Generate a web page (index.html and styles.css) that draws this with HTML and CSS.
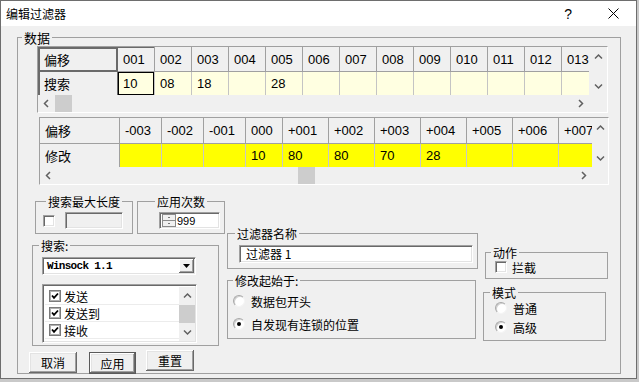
FILE: index.html
```html
<!DOCTYPE html>
<html lang="zh">
<head>
    <meta charset="UTF-8">
    <title>编辑过滤器</title>
    <link rel="stylesheet" href="styles.css">
</head>
<body>
<div class="window">
    <div class="titlebar">
        <span class="title">编辑过滤器</span>
        <span class="help">?</span>
        <span class="close">
            <svg width="11" height="11" viewBox="0 0 11 11"><path d="M0.5 0.5 L10.5 10.5 M10.5 0.5 L0.5 10.5" stroke="#000" stroke-width="1"/></svg>
        </span>
    </div>

    <div class="client">
        <fieldset class="box data-box">
            <legend>数据</legend>

            <!-- search bytes -->
            <div class="grid grid-search">
                <div class="grid-main">
                    <div class="cells">
                        <div class="cell head corner">偏移</div>
                        <div class="cell head sel-col">001</div>
                        <div class="cell head">002</div>
                        <div class="cell head">003</div>
                        <div class="cell head">004</div>
                        <div class="cell head">005</div>
                        <div class="cell head">006</div>
                        <div class="cell head">007</div>
                        <div class="cell head">008</div>
                        <div class="cell head">009</div>
                        <div class="cell head">010</div>
                        <div class="cell head">011</div>
                        <div class="cell head">012</div>
                        <div class="cell head">013</div>
                        <div class="cell rowhead sel-row">搜索</div>
                        <div class="cell val current">10</div>
                        <div class="cell val">08</div>
                        <div class="cell val">18</div>
                        <div class="cell val"></div>
                        <div class="cell val">28</div>
                        <div class="cell val"></div>
                        <div class="cell val"></div>
                        <div class="cell val"></div>
                        <div class="cell val"></div>
                        <div class="cell val"></div>
                        <div class="cell val"></div>
                        <div class="cell val"></div>
                        <div class="cell val"></div>
                    </div>
                    <div class="vscroll">
                        <span class="arrow"><svg width="9" height="7" viewBox="0 0 9 7"><path d="M1 5.5 L4.5 2 L8 5.5" fill="none" stroke="#606060" stroke-width="1.5"/></svg></span>
                        <span class="arrow"><svg width="9" height="7" viewBox="0 0 9 7"><path d="M1 1.5 L4.5 5 L8 1.5" fill="none" stroke="#606060" stroke-width="1.5"/></svg></span>
                    </div>
                </div>
                <div class="hscroll-row">
                    <div class="hscroll">
                        <span class="arrow"><svg width="7" height="9" viewBox="0 0 7 9"><path d="M5 1 L1.5 4.5 L5 8" fill="none" stroke="#606060" stroke-width="1.5"/></svg></span>
                        <span class="thumb"></span>
                        <span class="fill"></span>
                        <span class="arrow"><svg width="7" height="9" viewBox="0 0 7 9"><path d="M2 1 L5.5 4.5 L2 8" fill="none" stroke="#606060" stroke-width="1.5"/></svg></span>
                    </div>
                    <div class="scroll-corner"></div>
                </div>
            </div>

            <!-- modify bytes -->
            <div class="grid grid-modify">
                <div class="grid-main">
                    <div class="cells">
                        <div class="cell head">偏移</div>
                        <div class="cell head">-003</div>
                        <div class="cell head">-002</div>
                        <div class="cell head">-001</div>
                        <div class="cell head">000</div>
                        <div class="cell head">+001</div>
                        <div class="cell head">+002</div>
                        <div class="cell head">+003</div>
                        <div class="cell head">+004</div>
                        <div class="cell head">+005</div>
                        <div class="cell head">+006</div>
                        <div class="cell head">+007</div>
                        <div class="cell rowhead">修改</div>
                        <div class="cell val"></div>
                        <div class="cell val"></div>
                        <div class="cell val"></div>
                        <div class="cell val">10</div>
                        <div class="cell val">80</div>
                        <div class="cell val">80</div>
                        <div class="cell val">70</div>
                        <div class="cell val">28</div>
                        <div class="cell val"></div>
                        <div class="cell val"></div>
                        <div class="cell val"></div>
                    </div>
                    <div class="vscroll">
                        <span class="arrow"><svg width="9" height="7" viewBox="0 0 9 7"><path d="M1 5.5 L4.5 2 L8 5.5" fill="none" stroke="#606060" stroke-width="1.5"/></svg></span>
                        <span class="arrow"><svg width="9" height="7" viewBox="0 0 9 7"><path d="M1 1.5 L4.5 5 L8 1.5" fill="none" stroke="#606060" stroke-width="1.5"/></svg></span>
                    </div>
                </div>
                <div class="hscroll-row">
                    <div class="hscroll">
                        <span class="arrow"><svg width="7" height="9" viewBox="0 0 7 9"><path d="M5 1 L1.5 4.5 L5 8" fill="none" stroke="#606060" stroke-width="1.5"/></svg></span>
                        <span class="thumb"></span>
                        <span class="fill"></span>
                        <span class="arrow"><svg width="7" height="9" viewBox="0 0 7 9"><path d="M2 1 L5.5 4.5 L2 8" fill="none" stroke="#606060" stroke-width="1.5"/></svg></span>
                    </div>
                    <div class="scroll-corner"></div>
                </div>
            </div>

            <div class="lower">
                <!-- left column -->
                <div class="col-left">
                    <div class="row-small">
                        <fieldset class="box box-maxlen">
                            <legend class="centered">搜索最大长度</legend>
                            <div class="inline-row">
                                <span class="check"></span>
                                <span class="field field-disabled"></span>
                            </div>
                        </fieldset>
                        <fieldset class="box box-count">
                            <legend class="centered">应用次数</legend>
                            <div class="inline-row">
                                <span class="field spin-field">
                                    <span class="spin">
                                        <svg width="14" height="13" viewBox="0 0 14 13"><rect x="0.5" y="0.5" width="13" height="12" fill="#f0f0f0" stroke="#8a8a8a"/><path d="M1 6.5 H13" stroke="#8a8a8a"/><path d="M6.5 3.5 H7.5 M6.5 9.5 H7.5" stroke="#000"/></svg>
                                    </span>
                                    <span class="spin-value">999</span>
                                </span>
                            </div>
                        </fieldset>
                    </div>

                    <fieldset class="box box-search">
                        <legend>搜索:</legend>
                        <div class="select">
                            <span class="select-text">Winsock 1.1</span>
                            <span class="select-btn">
                                <svg width="7" height="4" viewBox="0 0 7 4"><path d="M0 0 H7 L3.5 4 Z" fill="#000"/></svg>
                            </span>
                        </div>
                        <div class="list">
                            <div class="items">
                                <div class="item"><span class="check checked"><svg width="8" height="8" viewBox="0 0 8 8"><path d="M1 3.5 L3 5.8 L7 1.5" fill="none" stroke="#000" stroke-width="1.8"/></svg></span>发送</div>
                                <div class="item"><span class="check checked"><svg width="8" height="8" viewBox="0 0 8 8"><path d="M1 3.5 L3 5.8 L7 1.5" fill="none" stroke="#000" stroke-width="1.8"/></svg></span>发送到</div>
                                <div class="item"><span class="check checked"><svg width="8" height="8" viewBox="0 0 8 8"><path d="M1 3.5 L3 5.8 L7 1.5" fill="none" stroke="#000" stroke-width="1.8"/></svg></span>接收</div>
                            </div>
                            <div class="list-scroll">
                                <span class="arrow"><svg width="9" height="7" viewBox="0 0 9 7"><path d="M1 5.5 L4.5 2 L8 5.5" fill="none" stroke="#606060" stroke-width="1.5"/></svg></span>
                                <span class="list-thumb"></span>
                                <span class="arrow"><svg width="9" height="7" viewBox="0 0 9 7"><path d="M1 1.5 L4.5 5 L8 1.5" fill="none" stroke="#606060" stroke-width="1.5"/></svg></span>
                            </div>
                        </div>
                    </fieldset>

                    <div class="buttons">
                        <button class="btn btn-cancel">取消</button>
                        <button class="btn btn-apply">应用</button>
                        <button class="btn btn-reset">重置</button>
                    </div>
                </div>

                <!-- middle column -->
                <div class="col-mid">
                    <fieldset class="box box-name">
                        <legend>过滤器名称</legend>
                        <div class="field name-field">过滤器 1</div>
                    </fieldset>
                    <fieldset class="box box-start">
                        <legend>修改起始于:</legend>
                        <div class="radio-row first"><span class="radio"></span>数据包开头</div>
                        <div class="radio-row second"><span class="radio on"></span>自发现有连锁的位置</div>
                    </fieldset>
                </div>

                <!-- right column -->
                <div class="col-right">
                    <fieldset class="box box-action">
                        <legend>动作</legend>
                        <div class="check-row"><span class="check"></span>拦截</div>
                    </fieldset>
                    <fieldset class="box box-mode">
                        <legend>模式</legend>
                        <div class="radio-row first"><span class="radio"></span>普通</div>
                        <div class="radio-row second"><span class="radio on"></span>高级</div>
                    </fieldset>
                </div>
            </div>
        </fieldset>
    </div>
</div>
</body>
</html>
```

FILE: styles.css
```css
* {
    box-sizing: border-box;
}

body {
    margin: 0;
    background: #c9c9c9;
    font-family: "Noto Sans CJK SC", sans-serif;
    font-size: 12px;
    color: #000;
}

.window {
    width: 637px;
    height: 379px;
    border: 1px solid #6e6e6e;
    background: #f0f0f0;
    display: flex;
    flex-direction: column;
}

/* title bar */
.titlebar {
    height: 25px;
    flex-shrink: 0;
    background: #fff;
    display: flex;
    align-items: center;
    padding-left: 5px;
}

.title {
    font-size: 12px;
    flex: 1;
}

.help {
    font-family: "Liberation Sans", sans-serif;
    font-size: 14px;
    margin-right: 36px;
}

.close {
    display: flex;
    margin-right: 17px;
}

/* group boxes */
.box {
    margin: 0;
    padding: 0;
    border: 1px solid #a0a0a0;
    min-width: 0;
}

.box legend {
    padding: 0 2px;
    line-height: 15px;
    font-size: 12px;
}

.box legend.centered {
    margin-left: auto;
    margin-right: auto;
}

.data-box {
    margin: 4px 0 0 16px;
    width: 604px;
    height: 344px;
}

.data-box > legend {
    margin-left: 4px;
    font-size: 13px;
}

/* byte grids */
.grid {
    background: #f0f0f0;
    border: 1px solid;
    border-color: #a0a0a0 #fff #fff #a0a0a0;
}

.grid-search {
    margin: 1px 0 0 19px;
    width: 571px;
}

.grid-modify {
    margin: 4px 0 0 21px;
    width: 570px;
}

.grid-main {
    display: flex;
}

.cells {
    display: grid;
    overflow: hidden;
}

.grid-search .cells {
    width: 551px;
    grid-template-columns: 80px repeat(13, 37px);
    grid-template-rows: 25px 23px;
}

.grid-modify .cells {
    width: 552px;
    grid-template-columns: 80px 42px 42px 42px 37px repeat(7, 46px);
    grid-template-rows: 26px 23px;
}

.cell {
    display: flex;
    align-items: center;
    padding-left: 5px;
    white-space: nowrap;
    font-family: "Liberation Sans", "Noto Sans CJK SC", sans-serif;
    font-size: 13px;
    border-right: 1px solid #a0a0a0;
    border-bottom: 1px solid #a0a0a0;
}

.cell.head,
.cell.rowhead {
    background: #f0f0f0;
}

.cell.rowhead {
    border-bottom: none;
}

.cell.val {
    background: #ffffe1;
    border-right-color: #c4c4c4;
    border-bottom: none;
}

.grid-modify .cell.val {
    background: #ffff00;
    border-right-color: #c8c8c8;
}

.cell.corner {
    padding-left: 6px;
    box-shadow: inset 0 0 0 2px #6a6a6a;
    border: none;
}

.cell.sel-col {
    box-shadow: inset 0 1px 0 #6a6a6a;
}

.cell.sel-row {
    padding-left: 6px;
    border-right: none;
    box-shadow: inset 2px 0 0 #6a6a6a, inset -1px 0 0 #6a6a6a;
}

.cell.current {
    box-shadow: inset 0 0 0 1px #000;
}

.vscroll {
    flex: 1;
    display: flex;
    flex-direction: column;
    justify-content: space-between;
    padding: 6px 0 5px;
}

.arrow {
    display: flex;
    align-items: center;
    justify-content: center;
}

.hscroll-row {
    display: flex;
    height: 17px;
}

.hscroll {
    display: flex;
    width: 551px;
}

.grid-modify .hscroll {
    width: 552px;
}

.hscroll .arrow {
    width: 17px;
}

.hscroll .fill {
    flex: 1;
}

.thumb {
    width: 17px;
    background: #cdcdcd;
}

.grid-modify .thumb {
    margin-left: 241px;
}

.scroll-corner {
    flex: 1;
}

/* lower part */
.lower {
    display: flex;
    align-items: flex-start;
}

.col-left {
    width: 198px;
    margin-left: 11px;
}

.row-small {
    display: flex;
    gap: 4px;
    margin: 9px 0 0 6px;
}

.box-maxlen {
    width: 98px;
    height: 40px;
}

.box-count {
    width: 88px;
    height: 40px;
}

.inline-row {
    display: flex;
    align-items: center;
    margin-top: 3px;
}

.box-maxlen .inline-row {
    padding-left: 7px;
}

.box-count .inline-row {
    padding-left: 21px;
}

.field {
    background: #fff;
    border: 1px solid;
    border-color: #a0a0a0 #fff #fff #a0a0a0;
    box-shadow: inset 1px 1px 0 #696969, inset -1px -1px 0 #e3e3e3;
}

.field-disabled {
    background: #f0f0f0;
    width: 58px;
    height: 17px;
    margin-left: 10px;
}

.spin-field {
    display: flex;
    align-items: center;
    width: 61px;
    height: 17px;
    padding-left: 2px;
}

.spin {
    display: flex;
}

.spin-value {
    font-family: "Liberation Sans", sans-serif;
    font-size: 11px;
    margin-left: 1px;
}

.check {
    display: inline-flex;
    align-items: center;
    justify-content: center;
    width: 12px;
    height: 12px;
    flex-shrink: 0;
    background: #fff;
    border: 1px solid;
    border-color: #a0a0a0 #fff #fff #a0a0a0;
    box-shadow: inset 1px 1px 0 #696969, inset -1px -1px 0 #e3e3e3;
}

.check.checked {
    border: 1px solid #7a7a7a;
    box-shadow: inset 0 0 0 1px #b0b0b0;
}

.box-search {
    width: 187px;
    height: 108px;
    margin: 4px 0 0 3px;
}

.box-search legend {
    margin-left: 6px;
}

.select {
    display: flex;
    align-items: center;
    width: 154px;
    height: 18px;
    margin: 4px 0 0 9px;
    background: #fff;
    border: 1px solid;
    border-color: #a0a0a0 #fff #fff #a0a0a0;
    box-shadow: inset 1px 1px 0 #696969, inset -1px -1px 0 #e3e3e3;
    padding: 1px 1px 1px 4px;
}

.select-text {
    flex: 1;
    font-family: "Liberation Mono", monospace;
    font-size: 11px;
    font-weight: bold;
    letter-spacing: -0.7px;
}

.select-btn {
    width: 15px;
    height: 14px;
    display: flex;
    align-items: center;
    justify-content: center;
    background: #f0f0f0;
    box-shadow: inset -1px -1px 0 #696969, inset 1px 1px 0 #fff, inset -2px -2px 0 #a0a0a0;
}

.list {
    display: flex;
    width: 155px;
    height: 59px;
    margin: 9px 0 0 9px;
    background: #fff;
    border: 1px solid;
    border-color: #a0a0a0 #fff #fff #a0a0a0;
    box-shadow: inset 1px 1px 0 #696969, inset -1px -1px 0 #e3e3e3;
    padding: 2px 1px 1px 2px;
}

.items {
    flex: 1;
    padding-top: 1px;
}

.item {
    display: flex;
    align-items: center;
    height: 17px;
    padding-left: 4px;
    border-bottom: 1px solid #ececec;
}

.item .check {
    margin-right: 3px;
}

.list-scroll {
    width: 16px;
    display: flex;
    flex-direction: column;
    background: #f0f0f0;
}

.list-scroll .arrow {
    height: 17px;
}

.list-thumb {
    flex: 1;
    background: #cdcdcd;
    margin: 1px 0 1px;
}

.buttons {
    display: flex;
    align-items: flex-start;
    margin-top: 6px;
}

.btn {
    font-family: "Noto Sans CJK SC", sans-serif;
    font-size: 12px;
    padding: 0;
    height: 21px;
    width: 48px;
    background: #f0f0f0;
    border: none;
    box-shadow: inset -1px -1px 0 #696969, inset 1px 1px 0 #fff, inset -2px -2px 0 #a0a0a0, inset 2px 2px 0 #e3e3e3;
}

.btn-apply {
    width: 47px;
    height: 22px;
    margin-left: 12px;
    border: 1px solid #5a5a5a;
}

.btn-reset {
    margin-left: 10px;
    margin-top: -2px;
}

/* middle column */
.col-mid {
    width: 251px;
    margin-top: 41px;
}

.box-name {
    width: 251px;
    height: 43px;
}

.box-name legend {
    margin-left: 7px;
}

.name-field {
    width: 234px;
    height: 18px;
    margin: 4px 0 0 11px;
    padding-left: 6px;
    line-height: 16px;
}

.box-start {
    width: 249px;
    height: 66px;
    margin-top: 4px;
}

.box-start legend {
    margin-left: 5px;
}

.radio-row {
    display: flex;
    align-items: center;
    height: 16px;
}

.radio {
    width: 12px;
    height: 12px;
    flex-shrink: 0;
    border-radius: 50%;
    background: #fff;
    border: 1px solid;
    border-color: #a8a8a8 #f4f4f4 #f4f4f4 #a8a8a8;
    box-shadow: inset 1px 1px 0 #d0d0d0;
    display: inline-flex;
    align-items: center;
    justify-content: center;
    margin-right: 6px;
}

.radio.on::after {
    content: "";
    width: 4px;
    height: 4px;
    border-radius: 50%;
    background: #000;
}

.box-start .radio-row {
    padding-left: 5px;
}

.box-start .radio-row.first {
    margin-top: 5px;
}

.box-start .radio-row.second {
    margin-top: 7px;
}

/* right column */
.col-right {
    width: 125px;
    margin: 60px 0 0 5px;
}

.box-action {
    width: 123px;
    height: 34px;
    margin-left: 2px;
}

.box-action legend {
    margin-left: 5px;
}

.check-row {
    display: flex;
    align-items: center;
    height: 14px;
    padding-left: 9px;
}

.check-row .check {
    margin-right: 5px;
}

.box-mode {
    width: 123px;
    height: 56px;
    margin-top: 6px;
}

.box-mode legend {
    margin-left: 6px;
}

.box-mode .radio-row {
    padding-left: 11px;
}

.box-mode .radio-row.second {
    margin-top: 3px;
}
```
